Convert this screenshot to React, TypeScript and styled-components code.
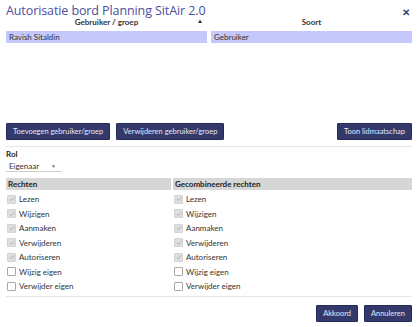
import styled, { createGlobalStyle } from "styled-components";

const GlobalStyle = createGlobalStyle`
  html, body {
    margin: 0;
    padding: 0;
    background: #ffffff;
  }
  body {
    font-family: Lato, "Open Sans", sans-serif;
    color: #333333;
  }
`;

const users = [{ name: "Ravish Sitaldin", kind: "Gebruiker" }];

const rights = [
    { label: "Lezen", checked: true },
    { label: "Wijzigen", checked: true },
    { label: "Aanmaken", checked: true },
    { label: "Verwijderen", checked: true },
    { label: "Autoriseren", checked: true },
    { label: "Wijzig eigen", checked: false },
    { label: "Verwijder eigen", checked: false },
];

const Dialog = styled.div`
    width: 418px;
    height: 327px;
    box-sizing: border-box;
    padding: 3px 6px 0 6px;
    display: flex;
    flex-direction: column;
    overflow: hidden;
`;

const TitleBar = styled.div`
    display: flex;
    align-items: center;
    justify-content: space-between;
    height: 14px;
`;

const Title = styled.h1`
    margin: 0;
    font-family: "Open Sans", "Noto Sans", sans-serif;
    font-size: 12.5px;
    font-weight: 400;
    color: #4b4ea0;
    letter-spacing: -0.1px;
`;

const Close = styled.span`
    font-size: 10px;
    font-weight: 700;
    color: #3a3f7a;
    margin-right: 2px;
    margin-top: 4px;
`;

const UserGrid = styled.div`
    display: grid;
    grid-template-columns: 201px 201px;
    column-gap: 4px;
    align-content: start;
    height: 106px;
`;

const HeadCell = styled.div`
    position: relative;
    font-size: 8px;
    font-weight: 700;
    color: #333;
    text-align: center;
    height: 10px;
    line-height: 10px;
`;

const SortArrow = styled.span`
    position: absolute;
    right: 4px;
    top: -1px;
    font-size: 6px;
    color: #222;
`;

const RowCell = styled.div`
    background: #c5c8fa;
    font-size: 8px;
    color: #333;
    height: 12px;
    line-height: 12px;
    padding-left: 3px;
    margin-top: 4px;
`;

const ButtonBar = styled.div`
    display: flex;
    gap: 6px;
    align-items: center;
    height: 17px;
`;

const Spacer = styled.div`
    flex: 1;
`;

const Button = styled.button`
    background: #333a6b;
    color: #e4e6f4;
    border: 1px solid #262b55;
    border-radius: 1px;
    font-family: Lato, "Open Sans", sans-serif;
    font-size: 7.5px;
    height: 17px;
    padding: 0 6px;
    cursor: pointer;
`;

const Separator = styled.hr<{ $gap: number }>`
    border: none;
    border-top: 1px solid #e6e6e6;
    margin: ${(p) => p.$gap}px 0 0 0;
    width: 100%;
`;

const RoleBlock = styled.div`
    display: flex;
    flex-direction: column;
    margin-top: 3px;
    gap: 1px;
`;

const RoleLabel = styled.div`
    font-size: 8px;
    font-weight: 700;
    color: #222;
    line-height: 9px;
`;

const Select = styled.div`
    width: 56px;
    height: 12px;
    box-sizing: border-box;
    border-bottom: 1px solid #cfcfcf;
    display: flex;
    align-items: center;
    justify-content: space-between;
    font-size: 8px;
    color: #333;
    padding: 0 3px;
`;

const Caret = styled.span`
    font-size: 5px;
    color: #777;
    margin-right: 3px;
`;

const RightsGrid = styled.div`
    display: grid;
    grid-template-columns: 165px 1fr;
    column-gap: 2px;
    margin-top: 6px;
`;

const RightsColumn = styled.div`
    display: flex;
    flex-direction: column;
`;

const RightsHead = styled.div`
    background: #d6d6d6;
    font-size: 8px;
    font-weight: 700;
    color: #222;
    height: 12px;
    line-height: 12px;
    padding-left: 2px;
    margin-bottom: 2px;
`;

const RightRow = styled.label`
    display: flex;
    align-items: center;
    gap: 3px;
    height: 14.5px;
    font-size: 8px;
    color: #333;
    padding-left: 1px;
`;

const Box = styled.span<{ $checked: boolean }>`
    width: 7px;
    height: 7px;
    border: 1px solid ${(p) => (p.$checked ? "#d4d4d4" : "#a8a8a8")};
    background: ${(p) => (p.$checked ? "#dedede" : "#ffffff")};
    border-radius: 1px;
    display: flex;
    align-items: center;
    justify-content: center;
`;

const Footer = styled.div`
    display: flex;
    justify-content: flex-end;
    gap: 6px;
    margin-top: 8px;
`;

const CheckBox = ({ checked }: { checked: boolean }) => (
    <Box $checked={checked}>
        {checked && (
            <svg width="6" height="6" viewBox="0 0 6 6">
                <path d="M1 3.2 L2.4 4.5 L5 1.5" fill="none" stroke="#a8a8a8" strokeWidth="0.9" />
            </svg>
        )}
    </Box>
);

const Rights = ({ title }: { title: string }) => (
    <RightsColumn>
        <RightsHead>{title}</RightsHead>
        {rights.map((r, i) => (
            <RightRow key={i}>
                <CheckBox checked={r.checked} />
                {r.label}
            </RightRow>
        ))}
    </RightsColumn>
);

const App = () => {
    return (
        <Dialog>
            <GlobalStyle />
            <TitleBar>
                <Title>Autorisatie bord Planning SitAir 2.0</Title>
                <Close>✕</Close>
            </TitleBar>
            <UserGrid>
                <HeadCell>
                    Gebruiker / groep
                    <SortArrow>▲</SortArrow>
                </HeadCell>
                <HeadCell>Soort</HeadCell>
                {users.map((u) => [
                    <RowCell key={u.name + "-n"}>{u.name}</RowCell>,
                    <RowCell key={u.name + "-k"}>{u.kind}</RowCell>,
                ])}
            </UserGrid>
            <ButtonBar>
                <Button>Toevoegen gebruiker/groep</Button>
                <Button>Verwijderen gebruiker/groep</Button>
                <Spacer />
                <Button>Toon lidmaatschap</Button>
            </ButtonBar>
            <Separator $gap={6} />
            <RoleBlock>
                <RoleLabel>Rol</RoleLabel>
                <Select>
                    Eigenaar
                    <Caret>▼</Caret>
                </Select>
            </RoleBlock>
            <RightsGrid>
                <Rights title="Rechten" />
                <Rights title="Gecombineerde rechten" />
            </RightsGrid>
            <Separator $gap={2} />
            <Footer>
                <Button>Akkoord</Button>
                <Button>Annuleren</Button>
            </Footer>
        </Dialog>
    );
};

export default App;
